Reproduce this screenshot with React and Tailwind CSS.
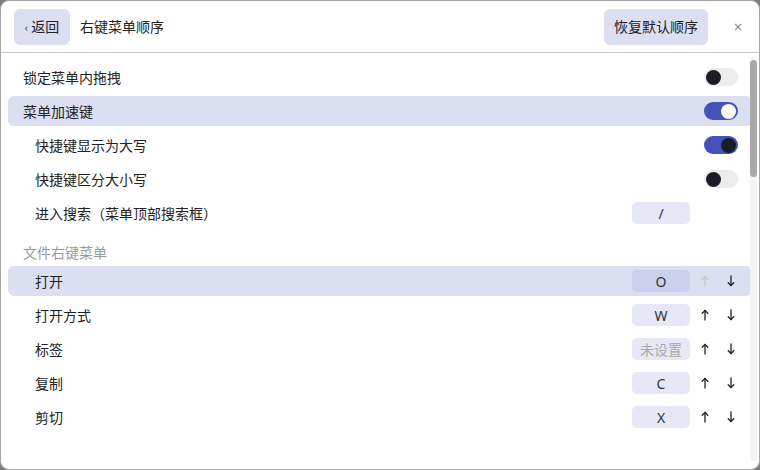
import React from "react";

const font = { fontFamily: '"Noto Sans CJK SC", "Noto Sans", sans-serif' };

function Toggle({ on, knob }) {
  return (
    <div
      className={`w-[34px] h-[18px] rounded-full flex items-center px-[2px] ${
        on ? "bg-[#4452b8] justify-end" : "bg-[#ececec] justify-start"
      }`}
    >
      <div
        className={`w-[15px] h-[15px] rounded-full ${
          knob === "white" ? "bg-white" : "bg-[#1c1c26]"
        }`}
      />
    </div>
  );
}

function KeyBox({ children, active, muted }) {
  return (
    <div
      className={`w-[58px] h-[22px] rounded-[5px] flex items-center justify-center text-[14px] font-['Noto_Sans','Noto_Sans_CJK_SC',sans-serif] ${
        active ? "bg-[#ccd0ec]" : "bg-[#e6e8f6]"
      } ${muted ? "text-[#aaaaaa]" : "text-[#333333]"}`}
    >
      {children}
    </div>
  );
}

function Row({ label, sub, active, children }) {
  return (
    <div
      className={`h-[30px] flex items-center rounded-[6px] pr-2 ${
        sub ? "pl-[27px]" : "pl-[15px]"
      } ${active ? "bg-[#dcdef2]" : ""}`}
    >
      <span className="flex-1 text-[14px] text-[#222222]">{label}</span>
      {children}
    </div>
  );
}

function Arrow({ up, color }) {
  return (
    <svg width="10" height="12" viewBox="0 0 10 12" fill="none" stroke={color} strokeWidth="1.3" strokeLinecap="round" strokeLinejoin="round">
      {up ? (
        <>
          <path d="M5 11V1.5" />
          <path d="M2.2 4.3L5 1.5L7.8 4.3" />
        </>
      ) : (
        <>
          <path d="M5 1V10.5" />
          <path d="M2.2 7.7L5 10.5L7.8 7.7" />
        </>
      )}
    </svg>
  );
}

function Arrows({ upDisabled }) {
  return (
    <div className="flex w-[54px] pl-[2px]">
      <span className="w-[26px] flex justify-center">
        <Arrow up color={upDisabled ? "#c8c8c8" : "#222222"} />
      </span>
      <span className="w-[26px] flex justify-center">
        <Arrow color="#222222" />
      </span>
    </div>
  );
}

export default function App() {
  return (
    <div className="w-[760px] h-[470px] bg-[#7e7e7e]" style={font}>
      <div className="relative w-full h-full bg-white border border-[#a6a6a6] rounded-[9px] overflow-hidden flex flex-col">
        <div className="h-[52px] shrink-0 border-b border-[#c9c9c9] flex items-center pl-[13px] pr-[16px]">
          <button className="h-[36px] w-[56px] rounded-[6px] bg-[#dcdef1] flex items-center justify-center gap-[3px] text-[14px] text-[#222222]">
            <span className="text-[11px] mt-[2px]">‹</span>
            <span>返回</span>
          </button>
          <span className="ml-[10px] text-[14px] text-[#222222] flex-1">
            右键菜单顺序
          </span>
          <button className="h-[36px] w-[104px] rounded-[6px] bg-[#dcdef1] text-[14px] text-[#222222]">
            恢复默认顺序
          </button>
          <span className="ml-[25px] text-[12px] text-[#888888] w-[10px] text-center font-['DejaVu_Sans',sans-serif]">
            ×
          </span>
        </div>

        <div className="flex-1 flex flex-col gap-[4px] pt-[9px] pl-[7px] pr-[7px]">
          <Row label="锁定菜单内拖拽">
            <div className="mr-[6px]">
              <Toggle on={false} knob="dark" />
            </div>
          </Row>
          <Row label="菜单加速键" active>
            <div className="mr-[6px]">
              <Toggle on knob="white" />
            </div>
          </Row>
          <Row label="快捷键显示为大写" sub>
            <div className="mr-[6px]">
              <Toggle on knob="dark" />
            </div>
          </Row>
          <Row label="快捷键区分大小写" sub>
            <div className="mr-[6px]">
              <Toggle on={false} knob="dark" />
            </div>
          </Row>
          <Row label="进入搜索（菜单顶部搜索框）" sub>
            <KeyBox>/</KeyBox>
            <div className="w-[54px]" />
          </Row>
          <div className="h-[30px] flex items-end pl-[15px] text-[14px] text-[#9a9a9a]">
            <span className="leading-[20px]">文件右键菜单</span>
          </div>
          <Row label="打开" sub active>
            <KeyBox active>O</KeyBox>
            <Arrows upDisabled />
          </Row>
          <Row label="打开方式" sub>
            <KeyBox>W</KeyBox>
            <Arrows />
          </Row>
          <Row label="标签" sub>
            <KeyBox muted>未设置</KeyBox>
            <Arrows />
          </Row>
          <Row label="复制" sub>
            <KeyBox>C</KeyBox>
            <Arrows />
          </Row>
          <Row label="剪切" sub>
            <KeyBox>X</KeyBox>
            <Arrows />
          </Row>
        </div>

        <div className="absolute right-[2px] top-[56px] bottom-[8px] w-[7px] bg-[#f4f4f4] rounded-full">
          <div className="mt-[3px] h-[117px] w-[7px] rounded-full bg-[#a9a9a9]" />
        </div>
      </div>
    </div>
  );
}
